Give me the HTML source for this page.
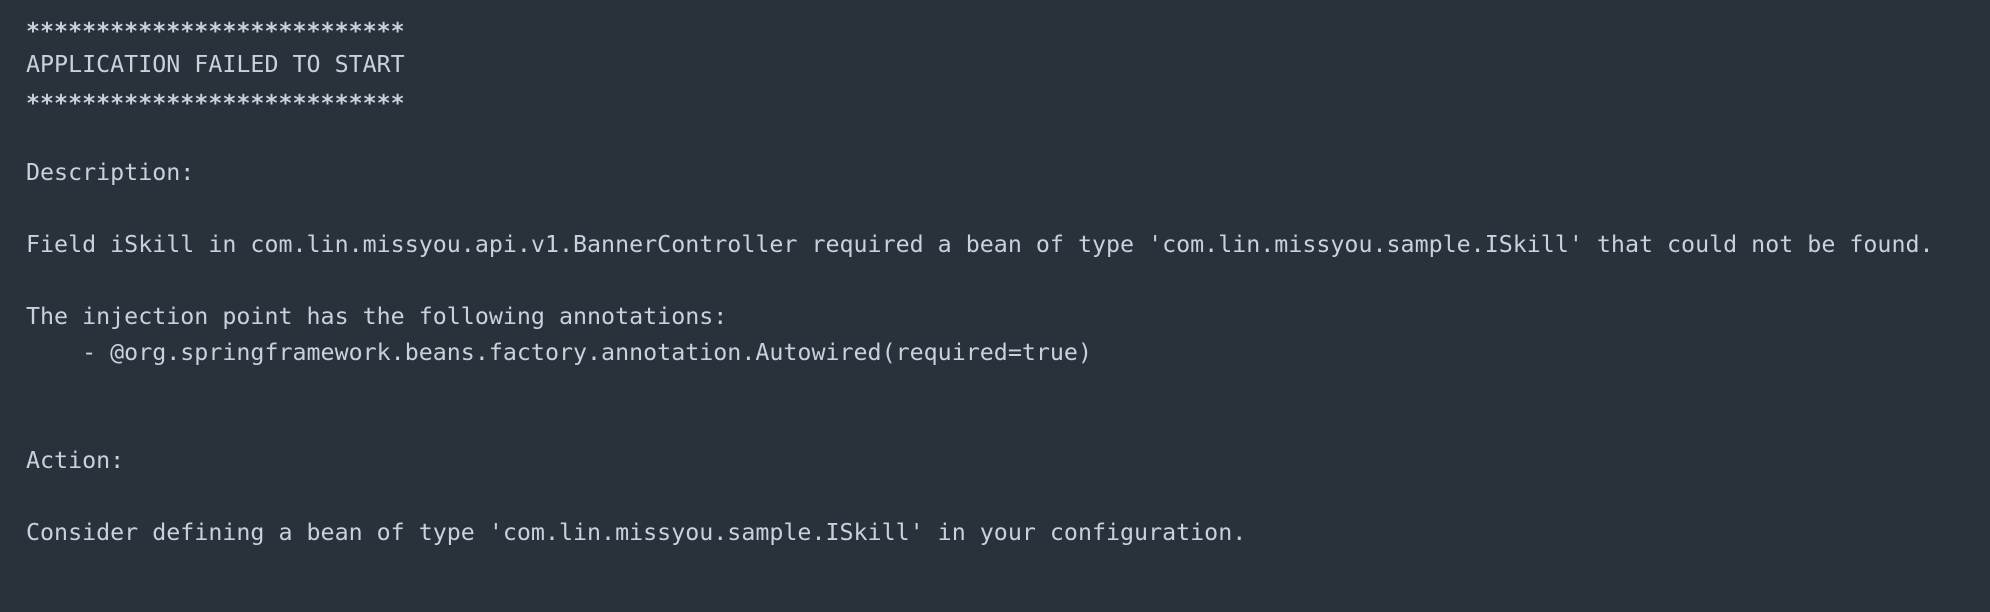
<!DOCTYPE html>
<html><head><meta charset="utf-8"><style>
html,body{margin:0;padding:0;background:#27323a;width:1990px;height:612px;overflow:hidden}
pre{margin:0;padding:11px 0 0 26px;font-family:"DejaVu Sans Mono","Liberation Mono",monospace;font-size:23.3px;line-height:36px;color:#c8d1de}
.s{position:relative;top:3px;font-weight:bold}
</style></head><body><pre><span class="s">***************************</span>
APPLICATION FAILED TO START
<span class="s">***************************</span>

Description:

Field iSkill in com.lin.missyou.api.v1.BannerController required a bean of type 'com.lin.missyou.sample.ISkill' that could not be found.

The injection point has the following annotations:
    - @org.springframework.beans.factory.annotation.Autowired(required=true)


Action:

Consider defining a bean of type 'com.lin.missyou.sample.ISkill' in your configuration.
</pre></body></html>
